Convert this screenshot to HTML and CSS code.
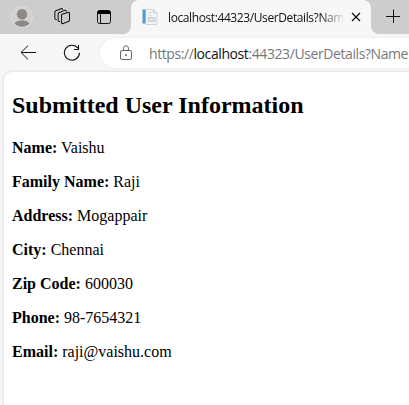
FILE: index.html
```html
<!DOCTYPE html>
<html lang="en">
<head>
<meta charset="utf-8">
<title>localhost:44323/UserDetails</title>
<link rel="stylesheet" href="styles.css">
</head>
<body>
<div class="browser">
  <header class="tabs">
    <div class="tools">
      <svg class="avatar" width="22" height="22" viewBox="0 0 22 22">
        <defs><clipPath id="round"><circle cx="11" cy="11" r="10"/></clipPath></defs>
        <circle cx="11" cy="11" r="10.5" fill="#d3d1ce" stroke="#dedbd5"/>
        <g clip-path="url(#round)" fill="#8c8a88"><circle cx="11" cy="8.3" r="5.2"/><ellipse cx="11" cy="19.500" rx="8.3" ry="5.2"/></g>
      </svg>
      <svg class="spaces" width="17" height="17" viewBox="0 0 18 18" fill="none" stroke="#111" stroke-width="1.1" stroke-linejoin="round" stroke-linecap="round">
        <path d="M8.5 6.6 14.6 4.7Q16.4 4.2 16.4 6V12.7Q16.4 13.8 15.3 14.2L9.5 16.4Q8 16.9 8 15.5V7.6Q8 6.8 8.5 6.6Z"/>
        <path d="M6 14.3Q4.4 14.6 4.4 13V6.3Q4.4 5.2 5.5 4.7L11.2 2.5Q12.7 2 12.9 3.3"/>
        <path d="M2.5 12.2Q.9 12.2.9 10.7V4.4Q.9 3.3 2 2.8L7.4.8Q8.9.3 9.2 1.5"/>
      </svg>
      <svg class="panes" width="14" height="14" viewBox="0 0 14 14">
        <rect x=".5" y=".5" width="13" height="13" rx="2" fill="none" stroke="#111"/>
        <path d="M.5 4V2.5Q.5.5 2.5.5h9q2 0 2 2V4Z"/><path d="M3.5 4v9.5" stroke="#111"/>
      </svg>
    </div>
    <div class="tab">
      <svg width="16" height="16" viewBox="0 0 16 16">
        <path d="M3.5.5h8l3.500 3.500v11.500H3.500Z" fill="#f3f5f8" stroke="#d0d5dc"/>
        <path d="M11.500.5V4H15" fill="#e1e5ea" stroke="#c6ccd4"/>
        <path d="M6 3.500h4M6 6h4" stroke="#d3d8df"/>
        <path d="M6 8.500h7v4H6Z" fill="#dfe3e9" stroke="#c8ced7"/>
        <path d="M.5.5h3v14h-3Z" fill="#4c9ed2"/><path d="M.5.5v14" stroke="#a3cce8"/>
      </svg>
      <span class="title">localhost:44323/UserDetails?Nam</span>
      <svg width="10" height="10" viewBox="0 0 10 10"><path d="m1 1 8 8M9 1 1 9" stroke="#111" stroke-width="1.2"/></svg>
    </div>
    <svg class="plus" width="14" height="14" viewBox="0 0 14 14"><path d="M0 7.500h14M7.500.5v14" stroke="#111"/></svg>
  </header>
  <nav class="toolbar">
    <svg class="back" width="17" height="15" viewBox="0 0 17 15" fill="none" stroke="#111"><path d="M16 7.500H1M8 .6 1 7.500l7 6.900"/></svg>
    <svg class="reload" width="18" height="18" viewBox="0 0 18 18" fill="none" stroke="#111" stroke-width="1.100"><path d="M14.900 4.200A7.500 7.500 0 1 0 16.400 8.700M15.500 1v4.500H11"/></svg>
    <div class="address">
      <svg width="12" height="16" viewBox="0 0 12 16" fill="none" stroke="#666"><rect x=".5" y="5.500" width="11" height="9" rx="1.500"/><path d="M3.500 5.500V3.300a2.500 2.500 0 0 1 5 0v2.200"/><circle cx="6" cy="10" r=".9" fill="#555" stroke="none"/></svg>
      <span class="url">https://<b>localhost</b>:44323/UserDetails?Name</span>
    </div>
  </nav>
  <main class="page">
    <h2>Submitted User Information</h2>
    <p><strong>Name:</strong> Vaishu</p>
    <p><strong>Family Name:</strong> Raji</p>
    <p><strong>Address:</strong> Mogappair</p>
    <p><strong>City:</strong> Chennai</p>
    <p><strong>Zip Code:</strong> 600030</p>
    <p><strong>Phone:</strong> 98-7654321</p>
    <p><strong>Email:</strong> raji@vaishu.com</p>
  </main>
</div>
</body>
</html>
```
FILE: styles.css
```css
* { box-sizing: border-box; }
body { margin: 0; overflow: hidden; }
svg { display: block; flex: none; }
.browser {
  display: flex;
  flex-direction: column;
  height: 100vh;
  overflow: hidden;
  background: #f7f7f7;
  font-family: "Open Sans", "Noto Sans", sans-serif;
}
.tabs { display: flex; flex: none; height: 34px; background: linear-gradient(#cdcdcd 50%, #f7f7f7 50%); }
.tools {
  display: flex;
  flex: none;
  width: 131px;
  padding-left: 11px;
  background: #cdcdcd;
  border-bottom-right-radius: 8px;
}
.avatar { margin-top: 6px; }
.spaces { margin: 8px 0 0 21px; }
.panes { margin: 10px 0 0 26px; }
.tab {
  display: flex;
  align-items: center;
  flex: none;
  width: 240px;
  padding-left: 11px;
  background: #f7f7f7;
  border-radius: 8px 8px 0 0;
}
.title {
  width: 175px;
  margin: 0 8px 0 10px;
  overflow: hidden;
  white-space: nowrap;
  font-size: 12px;
  letter-spacing: -0.4px;
  color: #111;
  -webkit-mask-image: linear-gradient(90deg, #000 152px, transparent 177px);
  mask-image: linear-gradient(90deg, #000 152px, transparent 177px);
}
.plus { box-sizing: content-box; padding: 9px 9px 11px 15px; background: #cdcdcd; border-bottom-left-radius: 8px; }
.toolbar { display: flex; flex: none; height: 38px; }
.back { margin: 11px 0 0 20px; }
.reload { margin: 10px 0 0 26px; }
.address {
  display: flex;
  align-items: center;
  flex: none;
  width: 340px;
  height: 30px;
  margin: 4px 0 0 19px;
  padding-left: 20px;
  background: #fff;
  border-radius: 15px;
  box-shadow: 0 0 2px #ddd;
}
.url { margin-left: 17px; white-space: nowrap; font-size: 14px; letter-spacing: -0.41px; color: #777; }
.url b { font-weight: 400; color: #111; }
.page {
  flex: 1;
  margin-left: 4px;
  padding: 20px 8px 0;
  background: #fff;
  border-top-left-radius: 8px;
  box-shadow: 0 0 3px #ccc;
  font: 16px "Liberation Serif", serif;
  color: #000;
}
.page h2 { margin: 0 0 20px; font-size: 24px; line-height: 27px; }
.page p { margin: 0 0 16px; line-height: 18px; }
```
